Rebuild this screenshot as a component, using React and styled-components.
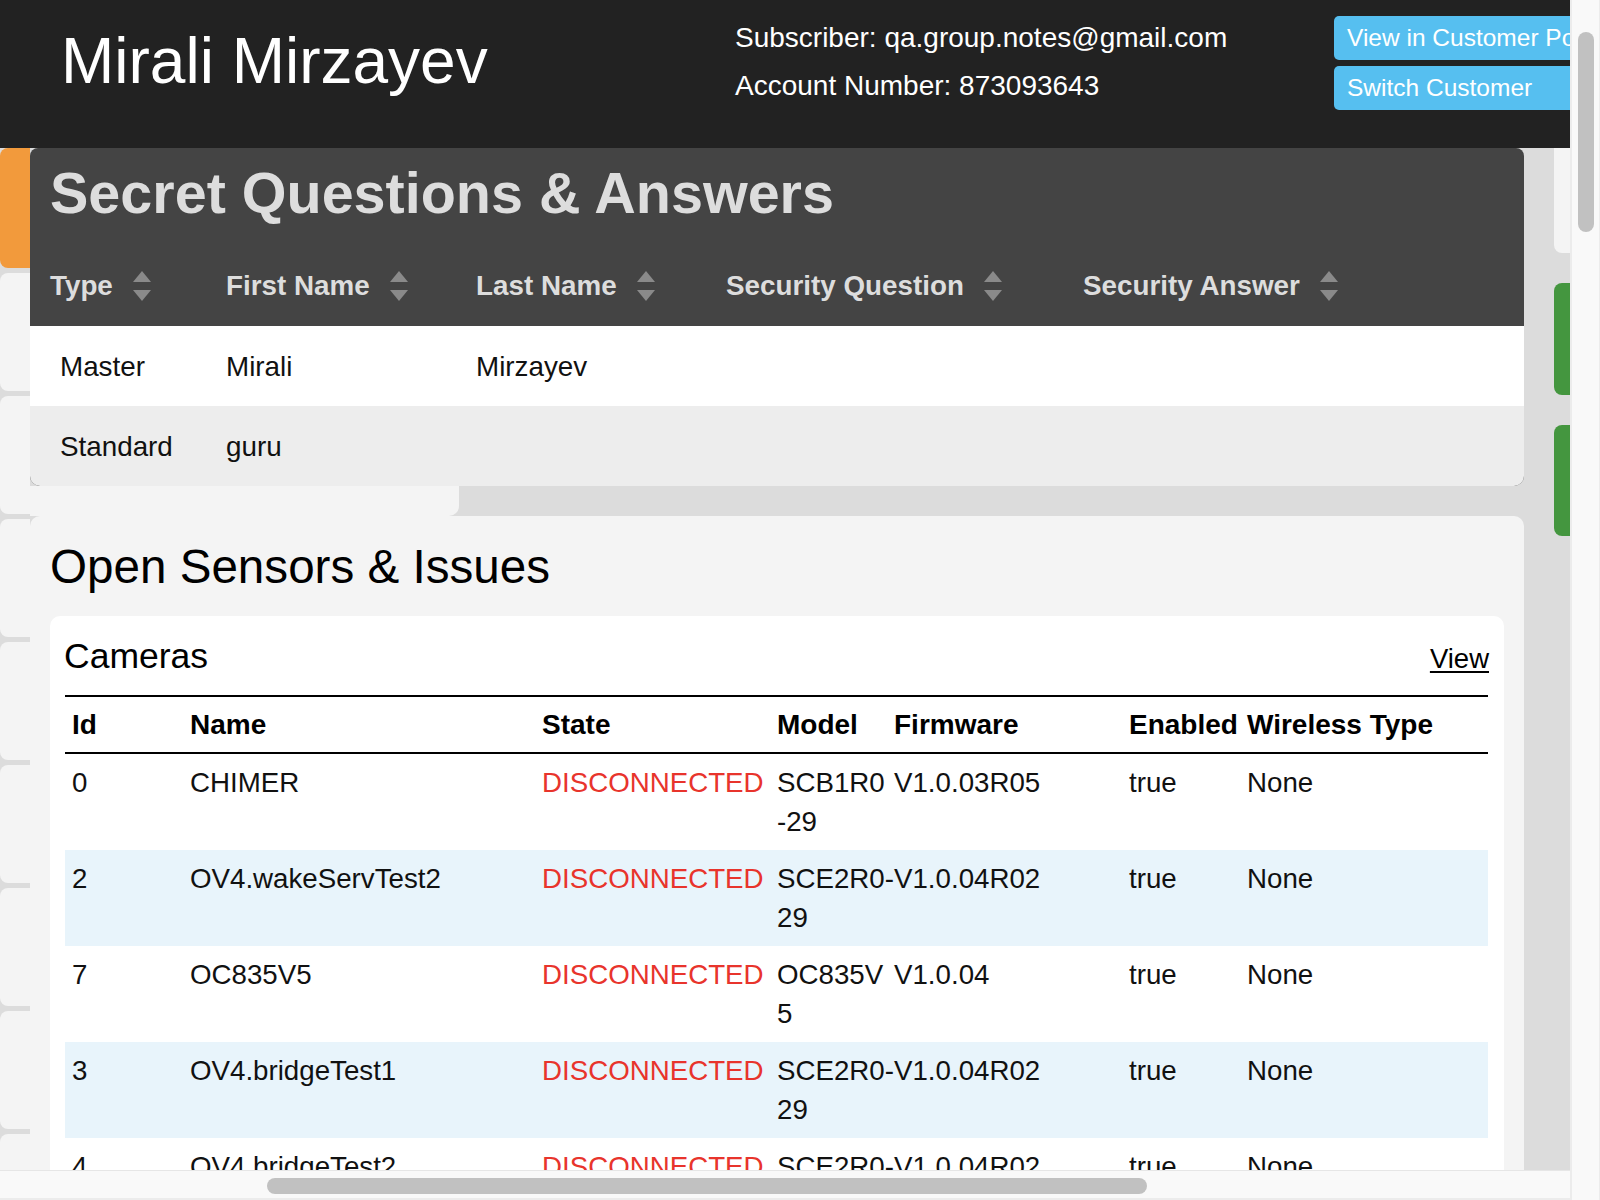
import React from "react";
import styled, { createGlobalStyle } from "styled-components";

const GlobalStyle = createGlobalStyle`
  html, body { margin: 0; padding: 0; overflow: hidden; background: #f9f9f9; }
  body { font-family: "Liberation Sans", Arial, Helvetica, sans-serif; }
  * { box-sizing: border-box; }
`;

const Screen = styled.div`
  display: grid;
  grid-template-columns: 1570px 30px;
  grid-template-rows: 1170px 30px;
  width: 1600px;
  height: 1200px;
  background: #f9f9f9;
`;

const Viewport = styled.div`
  grid-column: 1;
  grid-row: 1;
  overflow: hidden;
  background: #dcdcdc;
  display: flex;
  flex-direction: column;
`;

const Header = styled.header`
  flex: 0 0 148px;
  background: #222222;
  color: #ffffff;
  display: grid;
  grid-template-columns: 735px 599px 320px;
  overflow: hidden;
`;

const CustomerName = styled.h1`
  margin: 24px 0 0;
  padding-left: 61px;
  font-size: 64px;
  font-weight: 400;
  line-height: 74px;
  white-space: nowrap;
`;

const InfoBlock = styled.div`
  padding-top: 14px;
  font-size: 28px;
  line-height: 48px;
  white-space: nowrap;
`;

const ButtonStack = styled.div`
  display: flex;
  flex-direction: column;
  gap: 6px;
  padding-top: 16px;
`;

const HeaderButton = styled.button`
  height: 44px;
  width: 300px;
  border: 0;
  border-radius: 5px;
  background: #56bff0;
  color: #ffffff;
  font-family: inherit;
  font-size: 24.5px;
  line-height: 44px;
  padding: 0 13px;
  text-align: left;
  white-space: nowrap;
`;

const Canvas = styled.div`
  flex: 1;
  display: flex;
  align-items: flex-start;
`;

const SideColumn = styled.div`
  flex: 0 0 30px;
  display: flex;
  flex-direction: column;
  gap: 5px;
`;

const SideCard = styled.div`
  height: ${(p) => (p.$accent ? "120px" : "118px")};
  border-radius: 8px 0 0 8px;
  background: ${(p) => (p.$accent ? "#f29a3c" : "#f4f4f4")};
`;

const MainColumn = styled.div`
  flex: 0 0 1494px;
  display: flex;
  flex-direction: column;
`;

const SecretPanel = styled.section`
  background: #444444;
  border-radius: 8px 8px 10px 10px;
  overflow: hidden;
`;

const PanelTitle = styled.h2`
  margin: 0;
  padding: 13px 20px 25px;
  font-size: 57.5px;
  font-weight: 700;
  line-height: 64px;
  color: #dddddd;
  white-space: nowrap;
`;

const SecretTable = styled.table`
  width: 100%;
  border-collapse: collapse;
  table-layout: fixed;
`;

const SortTh = styled.th`
  height: 76px;
  padding: 0 0 4px 20px;
  text-align: left;
  font-size: 27.8px;
  font-weight: 700;
  color: #dddddd;
  white-space: nowrap;
  vertical-align: middle;
`;

const HeadLabel = styled.span`
  display: inline-flex;
  align-items: center;
  gap: 19px;
`;

const SecretRow = styled.tr`
  background: ${(p) => (p.$alt ? "#ededed" : "#ffffff")};
`;

const SecretTd = styled.td`
  height: 80px;
  padding: 2px 0 0 ${(p) => (p.$first ? "30px" : "20px")};
  font-size: 27.8px;
  color: #111111;
  vertical-align: middle;
  white-space: nowrap;
`;

const Shelf = styled.div`
  width: 429px;
  height: 30px;
  background: #f4f4f4;
  border-bottom-right-radius: 10px;
`;

const SensorsCard = styled.section`
  background: #f4f4f4;
  border-radius: 10px;
  padding: 24px 20px 40px;
`;

const SensorsTitle = styled.h2`
  margin: 0 0 22px;
  font-size: 47.6px;
  font-weight: 400;
  line-height: 54px;
  color: #000000;
  white-space: nowrap;
`;

const CamerasCard = styled.div`
  background: #ffffff;
  border-radius: 10px;
  padding: 20px 16px 20px 15px;
`;

const CamerasHead = styled.div`
  display: flex;
  justify-content: space-between;
  align-items: baseline;
  margin-bottom: 19px;
`;

const CamerasTitle = styled.h3`
  margin: 0 0 0 -1px;
  font-size: 35.5px;
  font-weight: 400;
  line-height: 40px;
  color: #000000;
`;

const ViewLink = styled.a`
  font-size: 27.5px;
  color: #000000;
  text-decoration: underline;
  text-underline-offset: 3px;
  margin-right: -1px;
`;

const CameraTable = styled.table`
  width: 100%;
  border-collapse: collapse;
  table-layout: fixed;
`;

const CamTh = styled.th`
  height: 57px;
  padding: 0 0 0 7px;
  border-top: 2px solid #000000;
  border-bottom: 2px solid #000000;
  text-align: left;
  font-size: 28px;
  font-weight: 700;
  color: #000000;
  white-space: nowrap;
  vertical-align: middle;
`;

const CamRow = styled.tr`
  background: ${(p) => (p.$alt ? "#e8f4fb" : "#ffffff")};
`;

const CamTd = styled.td`
  padding: 9px 0 9px 7px;
  font-size: 27.7px;
  line-height: 39px;
  color: ${(p) => (p.$alert ? "#e8342c" : "#111111")};
  vertical-align: top;
  white-space: nowrap;
  overflow: visible;
`;

const RightColumn = styled.div`
  flex: 0 0 200px;
  margin-left: 30px;
  display: flex;
  flex-direction: column;
  gap: 30px;
`;

const RightCard = styled.div`
  height: ${(p) => p.$h}px;
  border-radius: ${(p) => (p.$flatTop ? "0 0 0 8px" : "8px 0 0 8px")};
  background: ${(p) => (p.$green ? "#44963f" : "#f4f4f4")};
`;

const VTrack = styled.div`
  grid-column: 2;
  grid-row: 1 / span 2;
  background: #f9f9f9;
  border-left: 2px solid #ececec;
  border-right: 1px solid #ececec;
  padding: 32px 5px 0 6px;
`;

const VThumb = styled.div`
  width: 16px;
  height: 200px;
  border-radius: 8px;
  background: #c1c1c1;
`;

const HTrack = styled.div`
  grid-column: 1;
  grid-row: 2;
  background: #f9f9f9;
  border-top: 1px solid #e6e6e6;
  border-bottom: 2px solid #ececec;
  padding: 7px 0 0 267px;
`;

const HThumb = styled.div`
  width: 880px;
  height: 16px;
  border-radius: 8px;
  background: #c1c1c1;
`;

const SortIcon = () => (
  <svg width="20" height="30" viewBox="0 0 20 30" aria-hidden="true">
    <polygon points="10,0 19,11 1,11" fill="#8a8a8a" />
    <polygon points="1,19 19,19 10,30" fill="#8a8a8a" />
  </svg>
);

const secretCols = [176, 250, 250, 357, null];
const secretHeads = ["Type", "First Name", "Last Name", "Security Question", "Security Answer"];
const secretRows = [
  ["Master", "Mirali", "Mirzayev", "", ""],
  ["Standard", "guru", "", "", ""],
];

const camCols = [118, 352, 235, 117, 235, 118, null];
const camHeads = ["Id", "Name", "State", "Model", "Firmware", "Enabled", "Wireless Type"];
const cameras = [
  { id: "0", name: "CHIMER", model: ["SCB1R0", "-29"], fw: "V1.0.03R05" },
  { id: "2", name: "OV4.wakeServTest2", model: ["SCE2R0-", "29"], fw: "V1.0.04R02" },
  { id: "7", name: "OC835V5", model: ["OC835V", "5"], fw: "V1.0.04" },
  { id: "3", name: "OV4.bridgeTest1", model: ["SCE2R0-", "29"], fw: "V1.0.04R02" },
  { id: "4", name: "OV4.bridgeTest2", model: ["SCE2R0-", "29"], fw: "V1.0.04R02" },
  { id: "5", name: "OV4.bridgeTest3", model: ["SCE2R0-", "29"], fw: "V1.0.04R02" },
];

export default function App() {
  return (
    <>
      <GlobalStyle />
      <Screen>
        <Viewport>
          <Header>
            <CustomerName>Mirali Mirzayev</CustomerName>
            <InfoBlock>
              <div>Subscriber: qa.group.notes@gmail.com</div>
              <div>Account Number: 873093643</div>
            </InfoBlock>
            <ButtonStack>
              <HeaderButton>View in Customer Portal</HeaderButton>
              <HeaderButton>Switch Customer</HeaderButton>
            </ButtonStack>
          </Header>
          <Canvas>
            <SideColumn>
              <SideCard $accent />
              {Array.from({ length: 8 }).map((_, i) => (
                <SideCard key={i} />
              ))}
            </SideColumn>
            <MainColumn>
              <SecretPanel>
                <PanelTitle>Secret Questions &amp; Answers</PanelTitle>
                <SecretTable>
                  <colgroup>
                    {secretCols.map((w, i) => (
                      <col key={i} style={w ? { width: w } : undefined} />
                    ))}
                  </colgroup>
                  <thead>
                    <tr>
                      {secretHeads.map((h) => (
                        <SortTh key={h}>
                          <HeadLabel>
                            {h}
                            <SortIcon />
                          </HeadLabel>
                        </SortTh>
                      ))}
                    </tr>
                  </thead>
                  <tbody>
                    {secretRows.map((r, ri) => (
                      <SecretRow key={ri} $alt={ri % 2 === 1}>
                        {r.map((c, ci) => (
                          <SecretTd key={ci} $first={ci === 0}>
                            {c}
                          </SecretTd>
                        ))}
                      </SecretRow>
                    ))}
                  </tbody>
                </SecretTable>
              </SecretPanel>
              <Shelf />
              <SensorsCard>
                <SensorsTitle>Open Sensors &amp; Issues</SensorsTitle>
                <CamerasCard>
                  <CamerasHead>
                    <CamerasTitle>Cameras</CamerasTitle>
                    <ViewLink href="#">View</ViewLink>
                  </CamerasHead>
                  <CameraTable>
                    <colgroup>
                      {camCols.map((w, i) => (
                        <col key={i} style={w ? { width: w } : undefined} />
                      ))}
                    </colgroup>
                    <thead>
                      <tr>
                        {camHeads.map((h) => (
                          <CamTh key={h}>{h}</CamTh>
                        ))}
                      </tr>
                    </thead>
                    <tbody>
                      {cameras.map((c, i) => (
                        <CamRow key={c.id} $alt={i % 2 === 1}>
                          <CamTd>{c.id}</CamTd>
                          <CamTd>{c.name}</CamTd>
                          <CamTd $alert>DISCONNECTED</CamTd>
                          <CamTd>
                            {c.model[0]}
                            <br />
                            {c.model[1]}
                          </CamTd>
                          <CamTd>{c.fw}</CamTd>
                          <CamTd>true</CamTd>
                          <CamTd>None</CamTd>
                        </CamRow>
                      ))}
                    </tbody>
                  </CameraTable>
                </CamerasCard>
              </SensorsCard>
            </MainColumn>
            <RightColumn>
              <RightCard $h={105} $flatTop />
              <RightCard $h={112} $green />
              <RightCard $h={111} $green />
            </RightColumn>
          </Canvas>
        </Viewport>
        <VTrack>
          <VThumb />
        </VTrack>
        <HTrack>
          <HThumb />
        </HTrack>
      </Screen>
    </>
  );
}
